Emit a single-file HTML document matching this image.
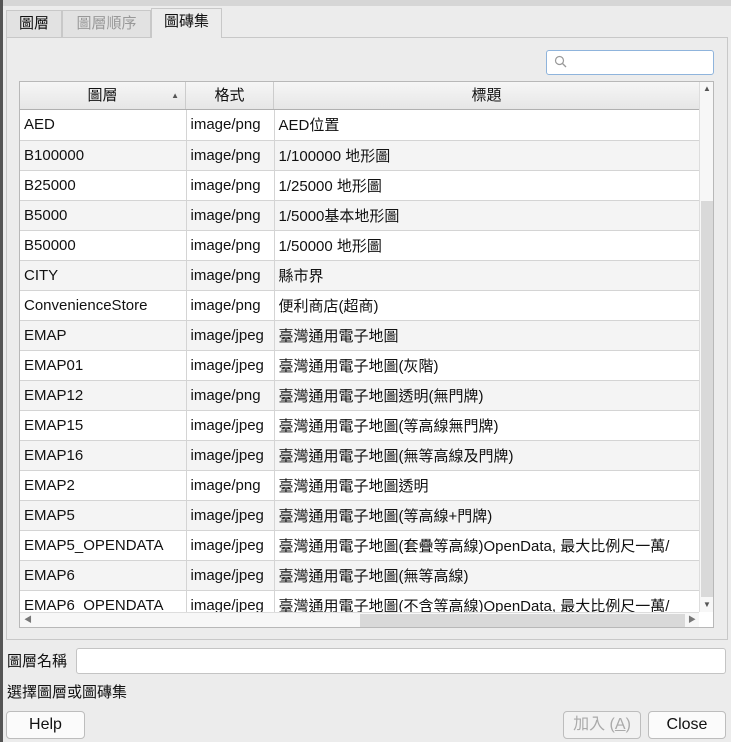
<!DOCTYPE html>
<html><head><meta charset="utf-8"><style>
*{margin:0;padding:0;box-sizing:border-box}
body{width:731px;height:742px;background:#ececec;font-family:"Liberation Sans","Noto Sans CJK TC",sans-serif;font-size:15px;color:#111;position:relative;overflow:hidden}
.abs{position:absolute}
.tab{position:absolute;top:10px;height:27px;border:1px solid #c8c8c8;border-bottom:none;background:#e2e2e2;line-height:26px;text-align:center;font-size:15px}
table{border-collapse:collapse;table-layout:fixed}
td{height:30px;border-bottom:1px solid #d4d4d4;border-right:1px solid #d4d4d4;padding-left:4px;white-space:nowrap;overflow:hidden}
tr:nth-child(even) td{background:#f4f4f4}
tr:nth-child(odd) td{background:#fff}
.btn{position:absolute;top:711px;height:28px;border:1px solid #bdbdbd;border-radius:4px;background:#fbfbfb;text-align:center;line-height:26px;font-size:16px}
</style></head><body>
<div class="abs" style="left:0;top:0;width:731px;height:6px;background:#d6d6d6"></div>
<div class="abs" style="left:0;top:0;width:3px;height:742px;background:#555"></div>
<div class="tab" style="left:6px;width:56px;">圖層</div>
<div class="tab" style="left:62px;width:89px;color:#999">圖層順序</div>
<div class="tab" style="left:151px;width:71px;top:8px;height:30px;background:#ececec;z-index:2">圖磚集</div>
<div class="abs" style="left:6px;top:37px;width:722px;height:603px;border:1px solid #c8c8c8;background:#ececec"></div>
<div class="abs" style="left:546px;top:50px;width:168px;height:25px;border:1px solid #8fb4dc;border-radius:3px;background:#fff"></div>
<svg class="abs" style="left:554px;top:55px" width="14" height="14"><circle cx="5.5" cy="5.5" r="4" fill="none" stroke="#999" stroke-width="1.2"/><line x1="8.5" y1="8.5" x2="12" y2="12" stroke="#999" stroke-width="1.3"/></svg>
<div class="abs" style="left:19px;top:81px;width:695px;height:547px;border:1px solid #b8b8b8;background:#fff;overflow:hidden">
<div class="abs" style="left:0;top:0;width:679px;height:28px;background:linear-gradient(#f6f6f6,#e6e6e6);border-bottom:1px solid #b0b0b0;font-size:15px">
<div class="abs" style="left:0;width:166px;height:27px;border-right:1px solid #ccc;text-align:center;line-height:27px">圖層<span style="position:absolute;right:6px;font-size:8px;color:#555">▲</span></div>
<div class="abs" style="left:166px;width:88px;height:27px;border-right:1px solid #ccc;text-align:center;line-height:27px">格式</div>
<div class="abs" style="left:254px;width:425px;height:27px;text-align:center;line-height:27px">標題</div>
</div>
<div class="abs" style="left:0;top:28px;width:679px;height:502px;overflow:hidden">
<table style="width:679px">
<colgroup><col style="width:166px"><col style="width:88px"><col style="width:425px"></colgroup>
<tr><td>AED</td><td>image/png</td><td>AED位置</td></tr>
<tr><td>B100000</td><td>image/png</td><td>1/100000 地形圖</td></tr>
<tr><td>B25000</td><td>image/png</td><td>1/25000 地形圖</td></tr>
<tr><td>B5000</td><td>image/png</td><td>1/5000基本地形圖</td></tr>
<tr><td>B50000</td><td>image/png</td><td>1/50000 地形圖</td></tr>
<tr><td>CITY</td><td>image/png</td><td>縣市界</td></tr>
<tr><td>ConvenienceStore</td><td>image/png</td><td>便利商店(超商)</td></tr>
<tr><td>EMAP</td><td>image/jpeg</td><td>臺灣通用電子地圖</td></tr>
<tr><td>EMAP01</td><td>image/jpeg</td><td>臺灣通用電子地圖(灰階)</td></tr>
<tr><td>EMAP12</td><td>image/png</td><td>臺灣通用電子地圖透明(無門牌)</td></tr>
<tr><td>EMAP15</td><td>image/jpeg</td><td>臺灣通用電子地圖(等高線無門牌)</td></tr>
<tr><td>EMAP16</td><td>image/jpeg</td><td>臺灣通用電子地圖(無等高線及門牌)</td></tr>
<tr><td>EMAP2</td><td>image/png</td><td>臺灣通用電子地圖透明</td></tr>
<tr><td>EMAP5</td><td>image/jpeg</td><td>臺灣通用電子地圖(等高線+門牌)</td></tr>
<tr><td>EMAP5_OPENDATA</td><td>image/jpeg</td><td>臺灣通用電子地圖(套疊等高線)OpenData, 最大比例尺一萬/</td></tr>
<tr><td>EMAP6</td><td>image/jpeg</td><td>臺灣通用電子地圖(無等高線)</td></tr>
<tr><td>EMAP6_OPENDATA</td><td>image/jpeg</td><td>臺灣通用電子地圖(不含等高線)OpenData, 最大比例尺一萬/</td></tr>
</table></div>
<div class="abs" style="left:679px;top:0;width:15px;height:530px;background:#f7f7f7;border-left:1px solid #ddd">
<div class="abs" style="left:3px;top:2px;font-size:8px;color:#555">▲</div>
<div class="abs" style="left:1px;top:119px;width:13px;height:396px;background:#d9d9d9"></div>
<div class="abs" style="left:3px;top:518px;font-size:8px;color:#555">▼</div>
</div>
<div class="abs" style="left:0;top:530px;width:679px;height:16px;background:#f7f7f7;border-top:1px solid #ddd">
<div class="abs" style="left:4px;top:1px;font-size:8px;color:#777">◀</div>
<div class="abs" style="left:340px;top:1px;width:325px;height:13px;background:#d9d9d9"></div>
<div class="abs" style="left:668px;top:1px;font-size:8px;color:#777">▶</div>
</div>
</div>
<div class="abs" style="left:7px;top:650px">圖層名稱</div>
<div class="abs" style="left:76px;top:648px;width:650px;height:26px;border:1px solid #c4c4c4;border-radius:3px;background:#fff"></div>
<div class="abs" style="left:7px;top:681px">選擇圖層或圖磚集</div>
<div class="btn" style="left:6px;width:79px">Help</div>
<div class="btn" style="left:563px;width:78px;color:#aaa;background:#f2f2f2">加入 (<u>A</u>)</div>
<div class="btn" style="left:648px;width:78px">Close</div>
</body></html>
